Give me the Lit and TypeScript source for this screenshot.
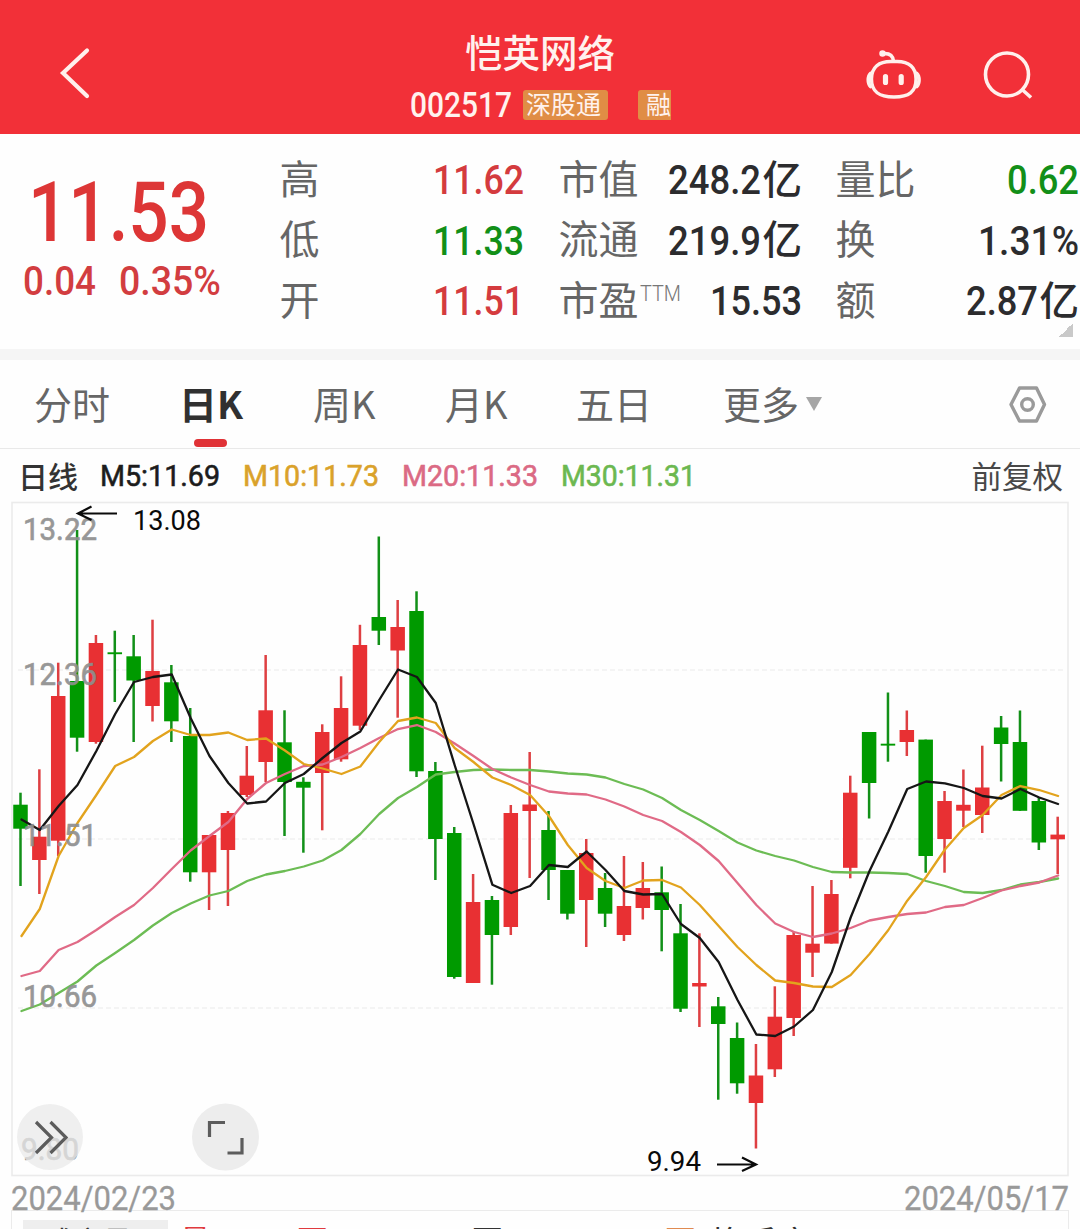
import { LitElement, html, svg, css } from "lit";
import { customElement, property } from "lit/decorators.js";

const RED = "#e83033";
const GREEN = "#009a00";
const CAP = 0.711;

/** Numeric or latin text set to an exact width, its box as tall as its capitals. */
const fit = (text: string, width: number, size: number, weight = 500) => html`
  <svg class="fit" width=${width} height=${Math.round(size * CAP)}>
    <text x="0" y=${Math.round(size * CAP)} textLength=${width} lengthAdjust="spacingAndGlyphs"
      font-size=${size} font-weight=${weight} fill="currentColor">${text}</text>
  </svg>`;

// [up?, high, low, body top, body bottom] in canvas units
type Candle = [number, number, number, number, number];
const candles: Candle[] = [
  [0, 792.7, 886, 804.7, 828.7], [1, 769.3, 894, 836.7, 860], [1, 662.7, 856, 696, 840.7],
  [0, 530, 751.7, 681, 737.7], [1, 635, 743.7, 643, 742], [0, 630.7, 702, 652.3, 654.2],
  [0, 635, 742, 656.3, 680.5], [1, 619.7, 721.5, 671, 706], [0, 665, 742, 682.3, 721.3],
  [0, 708, 881.7, 736, 872.3], [1, 835, 910, 835, 872.3], [1, 811, 906, 813, 850],
  [1, 746, 797, 775.7, 795], [1, 655, 782, 710.3, 762], [0, 710.3, 836, 742.3, 782],
  [0, 777.3, 852.7, 781.8, 787.7], [1, 724.3, 830.3, 732, 773], [1, 676.3, 761.7, 708, 759.3],
  [1, 624.8, 730, 645, 725.7], [0, 536.5, 645, 617, 630.7], [1, 600, 717.7, 627, 650.5],
  [0, 591.3, 777, 611, 771.3], [0, 762, 880, 771, 839], [0, 827, 978.7, 833, 977],
  [1, 874, 983, 902, 983], [0, 896, 984.7, 900, 935], [1, 805, 935, 813, 927],
  [1, 752, 878, 804.5, 811], [0, 811, 900, 830, 870], [0, 870, 919.5, 870, 913.7],
  [1, 839, 947, 853, 900], [0, 873, 927, 888, 913.7], [1, 856, 941, 906, 935],
  [1, 862, 919.5, 888, 908], [0, 866.5, 951.3, 892.3, 910], [0, 904, 1012, 933.3, 1008.7],
  [1, 933.3, 1027, 983, 986.5], [0, 997, 1099.7, 1006.3, 1024], [0, 1022.5, 1093.7, 1038, 1083.3],
  [1, 1044, 1148.5, 1075.5, 1103], [1, 986.3, 1077, 1016.7, 1069.3], [1, 931.5, 1036, 935, 1018],
  [1, 886, 977, 943.7, 952.7], [1, 880, 943.6, 894, 943.6], [1, 775.7, 878.3, 792.7, 867.8],
  [0, 732, 818.5, 732, 783], [0, 692.5, 761.7, 743.7, 745.6], [1, 710.5, 756, 730, 742],
  [0, 739.6, 872.7, 739.6, 856], [1, 791, 872.7, 801, 839], [1, 769.5, 827, 804.8, 810.7],
  [1, 745.7, 833, 787.5, 815], [0, 716, 781.5, 727.5, 744], [0, 710.5, 810.8, 742, 810.8],
  [0, 797, 850, 801, 842.5], [1, 816.7, 874, 834.6, 839.3],
];

const averages: { color: string; ys: number[] }[] = [
  { color: "#6cbc54", ys: [1011, 1004.5, 993, 981.5, 965.5, 953, 940, 925.5, 913, 903.5, 895.5, 891, 881, 874.5, 871, 866.5, 860.5, 850, 834, 814, 798, 787, 774.5, 772, 770, 769.5, 770, 770, 771.5, 773.5, 774.5, 777.5, 784, 789.5, 798, 810, 820, 831, 842.5, 850.5, 856, 860.5, 867, 872, 872.5, 872.5, 873, 874, 881, 886, 892, 893, 890, 884.5, 882, 878.5] },
  { color: "#e06a86", ys: [976, 971, 950, 942, 930, 917, 905, 888, 869, 850.5, 836, 822, 799, 783, 774, 766, 764.5, 757, 748, 738, 729, 725, 732, 743.5, 756, 769, 777.5, 785, 791.5, 793.5, 794.5, 799.5, 806.5, 815, 821, 832, 845, 861, 883, 905, 923.5, 932, 937, 933.5, 928, 920.5, 917, 914, 912.5, 907, 905, 898, 890.5, 886, 882.5, 875.5] },
  { color: "#e2a31d", ys: [936, 909, 856, 823, 795, 766, 757, 741, 729.5, 735, 735, 732.5, 740, 738.5, 750.5, 764, 768.5, 774, 766.5, 742, 721, 717.5, 723, 748, 762, 777.5, 785, 795, 816, 845, 868, 881, 888, 880.5, 880, 887.5, 905, 926, 947, 965, 980.5, 983, 986.5, 987, 975, 954, 930, 900.7, 877, 849.5, 828, 815, 795, 786, 790, 796] },
  { color: "#161616", ys: [819.5, 830, 806, 785, 751, 714, 682, 677, 674.5, 718, 756, 783, 803.5, 801.5, 783, 774, 758, 743, 731.5, 700, 669.5, 677, 703, 765, 824, 884.7, 893, 886, 865, 867, 851.5, 870, 891, 894.5, 894, 924, 938, 962, 1000, 1034.5, 1036, 1026.5, 1010, 972, 917.5, 871, 831.5, 789, 781.5, 783.3, 788, 796, 798.5, 789, 797.5, 804] },
];

const STEP = 18.858;
const cx = (i: number) => 20.5 + i * STEP;

@customElement("k-chart")
export class KChart extends LitElement {
  static styles = css`
    :host { display: block; height: 709px; }
    svg { display: block; overflow: visible; }
    text { font-family: Roboto, "Liberation Sans", sans-serif; }
    .axis { fill: #8f8f8f; stroke: #8f8f8f; stroke-width: 0.7px; opacity: 0.92; font-weight: 400; }
    .mark { fill: #0a0a0a; font-weight: 400; font-size: 27.5px; }
    .date { fill: #999; stroke: #999; stroke-width: 0.3px; font-weight: 400; font-size: 32.5px; }
  `;

  private label(text: string, x: number, y: number, w: number, cls: string, size?: number) {
    return svg`<text class=${cls} x=${x} y=${y} textLength=${w} lengthAdjust="spacingAndGlyphs" font-size=${size ?? 32}>${text}</text>`;
  }

  render() {
    return html`<svg width="1080" height="709" viewBox="0 501 1080 709">
      <rect x="12" y="502.5" width="1056" height="673" fill="none" stroke="#ebebeb" stroke-width="1.6" />
      ${[670, 839, 1008].map((y) => svg`<line x1="18" x2="1066" y1=${y} y2=${y} stroke="#f1f1f1" stroke-width="1.3" stroke-dasharray="5 3" />`)}
      ${candles.map(([up, hi, lo, top, bottom], i) => svg`
        <rect x=${cx(i) - 1.25} y=${hi} width="2.5" height=${lo - hi} fill=${up ? "#de3f42" : "#129018"} />
        <rect x=${cx(i) - 7.25} y=${top} width="14.5" height=${bottom - top} fill=${up ? RED : GREEN} />`)}
      ${averages.map(({ color, ys }) => svg`
        <polyline fill="none" stroke=${color} stroke-width="2.3" stroke-linejoin="round" stroke-linecap="round"
          points=${ys.map((y, i) => `${cx(i) + (i ? 0.4 : 1)},${y}`).join(" ")} />`)}
      ${this.label("13.22", 23, 540, 74, "axis")}
      ${this.label("12.36", 23, 685, 74, "axis")}
      ${this.label("11.51", 23, 846, 74, "axis")}
      ${this.label("10.66", 23, 1006.5, 74, "axis")}
      ${this.label("9.80", 21, 1159.5, 58, "axis")}
      ${this.label("13.08", 133, 529.5, 68, "mark")}
      ${this.label("9.94", 647, 1171, 54, "mark")}
      <g fill="none" stroke="#0a0a0a" stroke-width="2.2">
        <path d="M117 513.5H78M91.500 506.500L78 513.500L91.500 520" />
        <path d="M717 1164.500H756M742 1157.500L756 1164.500L742 1171" />
      </g>
      <circle cx="50" cy="1137" r="33" fill="#e9e9e9" fill-opacity="0.75" />
      <circle cx="225.500" cy="1137" r="33.500" fill="#ededed" />
      <g fill="none" stroke="#5c5c5c" stroke-width="3.200">
        <path d="M36 1122L51.500 1137.500L36 1153M50.500 1122L66 1137.500L50.500 1153" />
        <path d="M209.500 1137V1122.500H225M242 1138V1153H227.500" />
      </g>
      ${this.label("2024/02/23", 11, 1210, 165, "date")}
      ${this.label("2024/05/17", 904, 1210, 165, "date")}
    </svg>`;
  }
}

@customElement("quote-cell")
export class QuoteCell extends LitElement {
  @property() label = "";
  @property() sup = "";
  @property() value = "";
  @property() unit = "";
  @property() tone = "";
  @property({ type: Number }) w = 90;
  static styles = css`
    :host { display: flex; align-items: center; justify-content: space-between; height: 60.5px;
      font: 400 40px/44px "Noto Sans CJK SC", sans-serif; color: #2c2c2e; }
    .label { display: flex; color: #666; align-items: center; margin: -5px 0 0 -0.5px; }
    .sup { margin: -10px 0 0 1px; display: flex; color: #777; }
    .value { display: flex; align-items: center; color: #2c2c2e; }
    .up { color: #d43b3e; }
    .down { color: #128f18; }
    .unit { font-weight: 500; font-size: 39.5px; margin: -5px 0 0 2px; }
    .fit { display: block; overflow: visible; font-family: Roboto, sans-serif; }
  `;
  render() {
    return html`
      <span class="label">${this.label}${this.sup ? html`<span class="sup">${fit(this.sup, 41, 22, 300)}</span>` : ""}</span>
      <span class="value ${this.tone}">${fit(this.value, this.w, 41.5)}${this.unit ? html`<span class="unit">${this.unit}</span>` : ""}</span>`;
  }
}

@customElement("app-root")
export class AppRoot extends LitElement {
  static styles = css`
    :host { display: block; width: 1080px; height: 1229px; overflow: hidden; background: #fefefe;
      font-family: "Noto Sans CJK SC", sans-serif; color: #333; }
    .fit { display: block; overflow: visible; font-family: Roboto, sans-serif; flex: none; }
    svg { display: block; flex: none; overflow: visible; }
    .header { height: 134px; background: #f23038; display: grid; grid-template-columns: 410px 262px 408px; color: #fff2ee; }
    .back { padding: 46px 0 0 58px; }
    .name { font-size: 37.5px; font-weight: 500; line-height: 50px; text-align: center; margin-top: 26px; padding-right: 2px; white-space: nowrap; }
    .codes { display: flex; align-items: center; height: 30px; margin-top: 14px; }
    .badge { height: 30px; background: #e08d45; border-radius: 3px; font-size: 25px; line-height: 27px; padding: 0 5px 0 3px; margin-left: 11px; width: 77px; white-space: nowrap; flex: none; }
    .badge.cut { margin-left: 30px; padding: 0 0 0 8px; width: 25px; overflow: hidden; border-radius: 3px 0 0 3px; }
    .codes .fit { margin-top: -1px; }
    .actions { display: flex; padding: 46px 0 0 190px; gap: 68px; }
    .quote { height: 215px; display: grid; grid-template-columns: 280px 243.5px 35.500px 243px 34px 243px; box-sizing: border-box; }
    .price { color: #dd3636; padding: 48px 0 0 23px; }
    .big { padding-left: 5px; }
    .change { display: flex; gap: 23px; margin-top: 24px; color: #d23d40; }
    .col { padding-top: 15px; }
    .corner { width: 14px; height: 14px; margin: -8px 6px 0 auto; background: linear-gradient(135deg, transparent 50%, #c9c9c9 50%); }
    .band { height: 11px; background: #f5f5f5; }
    .tabs { height: 88px; border-bottom: 1px solid #e9e9e9; display: grid; box-sizing: content-box;
      grid-template-columns: 146px 133px 132px 131px 147px 285px 72px; padding-left: 34px; font-size: 38px; line-height: 85px; color: #666; }
    .tab { display: flex; white-space: nowrap; }
    .tab:last-child { padding-top: 24px; }
    .tab.on { font-weight: 700; color: #303030; position: relative; left: -1px; }
    .tab.on::after { content: ""; position: absolute; left: 15px; bottom: 1px; width: 33px; height: 8px; border-radius: 4px; background: #e03236; }
    .caret { align-self: center; height: 0; border: 8.5px solid transparent; border-top: 14px solid #a6a6a6; border-bottom: 0; margin-left: 7px; }
    .legend { height: 52px; display: flex; align-items: center; padding: 0 17px 0 18px; font-size: 30px; line-height: 50px; }
    .legend .line { width: 82px; font-weight: 500; margin-top: -1px; }
    .legend .adj { margin: -1px 0 0 auto; font-size: 30.5px; color: #484848; }
    .ma { margin-right: 23px; }
    .ma text { stroke: currentColor; stroke-width: 0.6px; }
    .m5 { color: #1c1c1c; } .m10 { color: #daa22a; } .m20 { color: #db6a84; } .m30 { color: #6cb850; }
    .sub { height: 19px; margin: 0 11px; border: 1.5px solid #ebebeb; border-bottom: 0; display: grid;
      grid-template-columns: 157px 117px 175px 193px 46px 120px; overflow: hidden;
      font-size: 30.5px; line-height: 38px; padding: 9px 0 0 11px; box-sizing: border-box; white-space: nowrap; color: #333; }
    .picker { width: 145px; height: 40px; background: #eee; padding-left: 22px; box-sizing: border-box; font-size: 29px; line-height: 40px; }
    .vol { color: #e03a3e; }
    .avg { color: #e08a50; }
    .turn { font-size: 33.5px; line-height: 41px; }
  `;

  render() {
    return html`
      <header class="header">
        <div class="back">
          <svg width="34" height="54" fill="none" stroke="#fff0ec" stroke-width="4.200" stroke-linecap="round"><path d="M29 4.500L5 27L29 50" /></svg>
        </div>
        <div>
          <div class="name">恺英网络</div>
          <div class="codes">${fit("002517", 102, 34.5, 500)}<span class="badge">深股通</span><span class="badge cut">融</span></div>
        </div>
        <div class="actions">
          <svg width="60" height="56" fill="none" stroke="#fff0ec" stroke-width="3.400" stroke-linecap="round">
            <path d="M29 15.500C17 15.500 9.500 21 9.500 33C9.500 46 17 51 32 51C47 51 54 46 54 33C54 21 47 15.500 35 15.500Z" />
            <path d="M21 7.500C27 7 31 9.500 31.500 15" />
            <circle cx="20.500" cy="7.500" r="2.500" fill="#fff0ec" stroke-width="1.500" />
            <path d="M8.500 27.500C5.500 30.500 5.500 37.500 8.500 40.500M54.800 27.500C57.800 30.500 57.800 37.500 54.800 40.500" stroke-width="3.600" />
            <path d="M23.500 30.500V36.500M39.200 30.500V36.500" stroke-width="5.200" />
          </svg>
          <svg width="60" height="56" fill="none" stroke="#fff0ec" stroke-width="3.600">
            <circle cx="17" cy="28.500" r="21.500" /><path d="M31.500 43L41 51.500" />
          </svg>
        </div>
      </header>
      <section class="quote">
        <div class="price">
          <div class="big">${fit("11.53", 181, 82.5, 500)}</div>
          <div class="change">${fit("0.04", 73, 41.5)}${fit("0.35%", 102, 41.5)}</div>
        </div>
        <div class="col">
          <quote-cell label="高" value="11.62" w="91" tone="up"></quote-cell>
          <quote-cell label="低" value="11.33" w="91" tone="down"></quote-cell>
          <quote-cell label="开" value="11.51" w="91" tone="up"></quote-cell>
        </div>
        <i></i>
        <div class="col">
          <quote-cell label="市值" value="248.2" unit="亿" w="93"></quote-cell>
          <quote-cell label="流通" value="219.9" unit="亿" w="93"></quote-cell>
          <quote-cell label="市盈" sup="TTM" value="15.53" w="92"></quote-cell>
        </div>
        <i></i>
        <div class="col">
          <quote-cell label="量比" value="0.62" w="72" tone="down"></quote-cell>
          <quote-cell label="换" value="1.31%" w="101"></quote-cell>
          <quote-cell label="额" value="2.87" unit="亿" w="72"></quote-cell>
          <div class="corner"></div>
        </div>
      </section>
      <div class="band"></div>
      <nav class="tabs">
        <span class="tab">分时</span><span class="tab on">日K</span><span class="tab">周K</span>
        <span class="tab">月K</span><span class="tab">五日</span><span class="tab">更多<i class="caret"></i></span>
        <span class="tab"><svg width="40" height="40" fill="none" stroke="#9a9a9a" stroke-width="3.400" stroke-linejoin="round">
          <path d="M11.500 4H28.500L36.500 20.500L28.500 37H11.500L3 20.500Z" /><circle cx="19.500" cy="20.500" r="5.800" /></svg></span>
      </nav>
      <div class="legend">
        <span class="line">日线</span>
        <span class="ma m5">${fit("M5:11.69", 120, 30, 400)}</span>
        <span class="ma m10">${fit("M10:11.73", 136, 30, 400)}</span>
        <span class="ma m20">${fit("M20:11.33", 136, 30, 400)}</span>
        <span class="ma m30">${fit("M30:11.31", 135, 30, 400)}</span>
        <span class="adj">前复权</span>
      </div>
      <k-chart></k-chart>
      <div class="sub">
        <span class="picker">成交量</span><span class="vol">量</span><span class="vol">万</span>
        <span>万</span><span class="avg">万</span><span class="turn">换手率</span>
      </div>
    `;
  }
}
